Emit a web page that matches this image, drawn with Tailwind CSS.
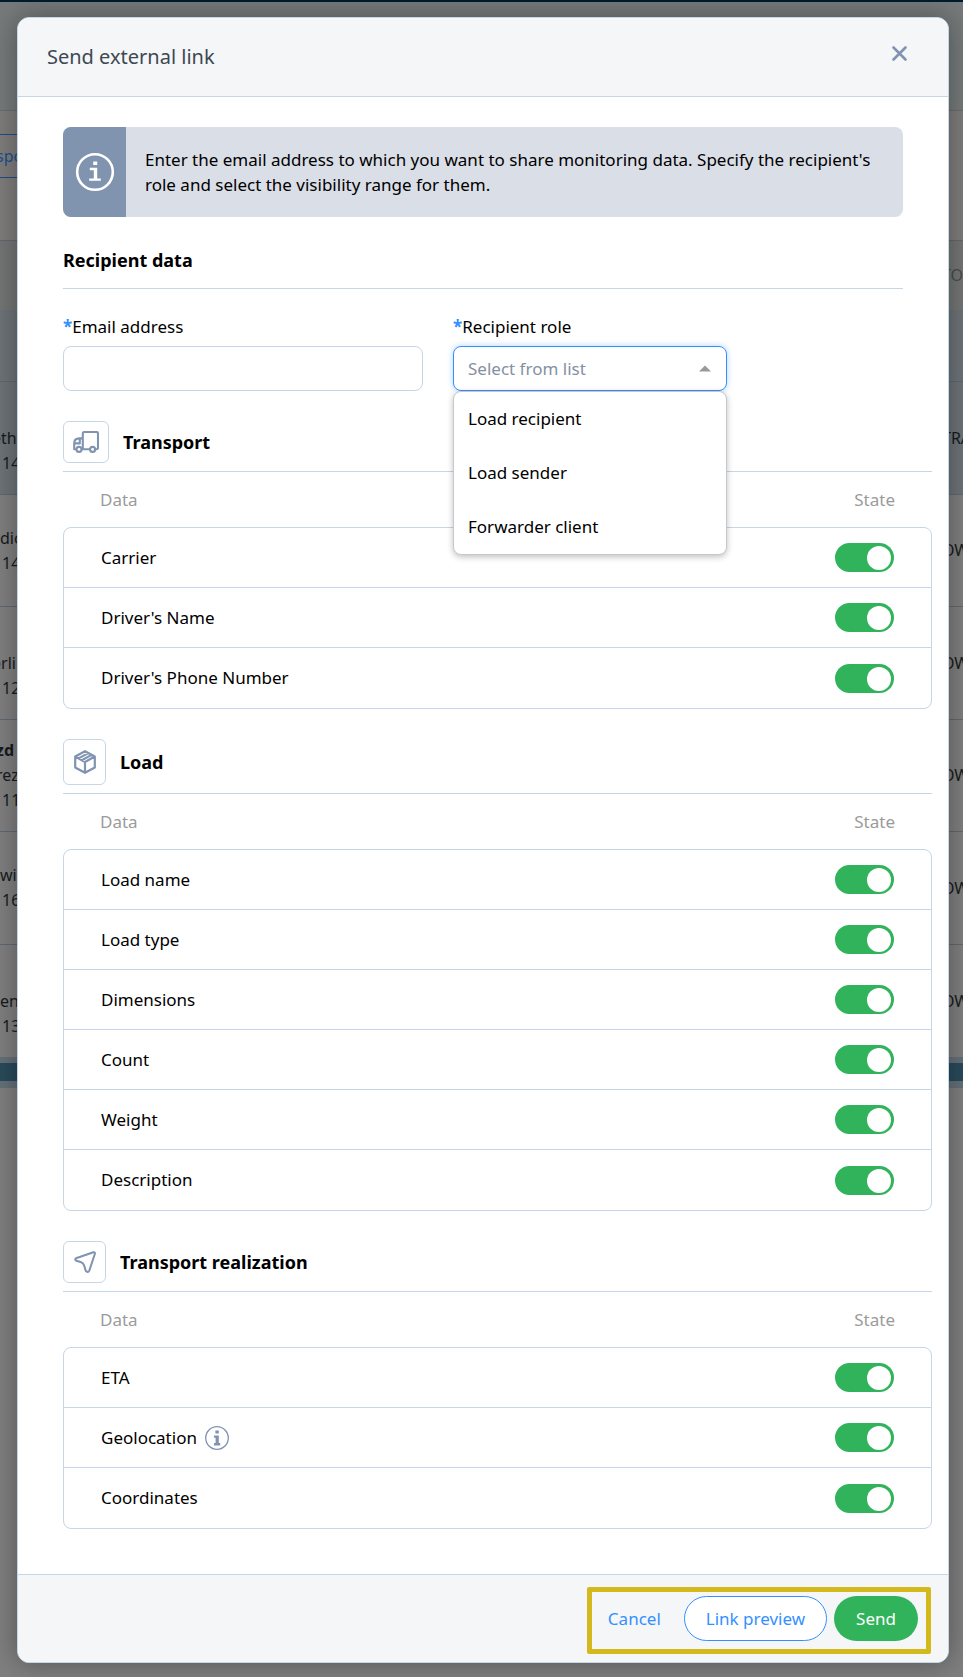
<!DOCTYPE html>
<html lang="en">
<head>
  <meta charset="utf-8" />
  <meta name="viewport" content="width=device-width, initial-scale=1" />
  <title>Send external link</title>
  <script src="https://cdn.jsdelivr.net/npm/@tailwindcss/browser@4"></script>
</head>
<body class="font-['Tahoma','Noto_Sans',sans-serif] text-[17px] leading-6 text-black bg-[#7f7f7f]">
  <div class="grid min-h-screen overflow-hidden">

    <!-- Monitoring list behind the dialog -->
    <div class="col-start-1 row-start-1 min-w-0 overflow-hidden text-base leading-[25px] text-[#161b20] whitespace-nowrap" aria-hidden="true">
      <div class="h-0.5 bg-[#001c2e]"></div>
      <div class="h-[109px] bg-[#767a7b] border-b border-[#686d71]"></div>
      <div class="h-[130px] pt-[23px] bg-[#7f7d7c] border-b border-[#5f6871]">
        <div class="w-8 h-11 border-y border-[#1c4f8c] text-[#1c4f8c] leading-[42px]"><span class="-ml-1">spo</span></div>
      </div>
      <div class="h-[69px] flex items-center justify-end bg-[#737674] text-[#494c50]"><span class="w-[21px]">TOR</span></div>
      <div class="h-[72px] bg-[#6d7378] border-b border-[#5f6871]"></div>
      <div class="h-[113px] flex items-center justify-between bg-[#6d7378] border-b border-[#5f6871]">
        <div><br /><span class="-ml-2">eth</span><br /><span class="pl-0.5">14</span></div><span class="w-[21px]">TRA</span>
      </div>
      <div class="h-28 flex items-center justify-between border-b border-[#5f6871]">
        <div>dic<br /><span class="pl-0.5">14</span></div><span class="w-[21px]">OW</span>
      </div>
      <div class="h-[113px] flex items-center justify-between border-b border-[#5f6871]">
        <div><br /><span class="-ml-2">erli</span><br /><span class="pl-0.5">12</span></div><span class="w-[21px]">OW</span>
      </div>
      <div class="h-28 flex items-center justify-between border-b border-[#5f6871]">
        <div><b class="-ml-1">zd</b><br /><span class="-ml-1">rez</span><br /><span class="pl-0.5">11</span></div><span class="w-[21px]">OW</span>
      </div>
      <div class="h-[113px] flex items-center justify-between border-b border-[#5f6871]">
        <div>wi<br /><span class="pl-0.5">16</span></div><span class="w-[21px]">OW</span>
      </div>
      <div class="h-28 flex items-center justify-between">
        <div><br />en<br /><span class="pl-0.5">13</span></div><span class="w-[21px]">OW</span>
      </div>
      <div class="h-[31px] bg-[#294a5b] border-t-[6px] border-b-[7px] border-[#657078]"></div>
    </div>

    <!-- Dialog -->
    <form role="dialog" aria-labelledby="dialog-title" class="col-start-1 row-start-1 relative self-start mt-[17px] mb-3.5 ml-[17px] mr-3.5 flex flex-col rounded-xl border border-[#c5d6e6] bg-white shadow-[0_0_28px_rgba(0,0,0,0.35)]">
      <header class="h-[79px] flex justify-between items-start pt-[23px] pl-[29px] pr-10 rounded-t-xl bg-[#f4f6f8] border-b border-[#c5d6e6]">
        <h1 id="dialog-title" class="text-xl leading-8 text-[#3d4852]">Send external link</h1>
        <button type="button" aria-label="Close" class="mt-1 text-[#8093b0]">
          <svg class="size-[17px]" viewBox="0 0 17 17" fill="none" stroke="currentColor" stroke-width="2.6" stroke-linecap="round"><path d="M2.5 2.5l12 12M14.5 2.5l-12 12" /></svg>
        </button>
      </header>

      <div class="pt-[30px] pb-[45px] pl-[45px] pr-4">
        <div class="mr-[29px]">
          <!-- Hint -->
          <div class="flex rounded-lg overflow-hidden bg-[#dadee7]">
            <div class="w-[63px] shrink-0 flex items-center justify-center bg-[#8093af]">
              <svg class="size-10" viewBox="0 0 40 40" fill="none"><circle cx="20" cy="20" r="17.8" stroke="#fff" stroke-width="2.6" /><path d="M18.2 9.5h4v3.4h-4zM14.8 15.8h7.4v10.6h3.6v2.4H14.2v-2.4h4.6v-8.2h-4z" fill="#fff" /></svg>
            </div>
            <p class="py-5 pl-[19px] pr-5 leading-[25px]">Enter the email address to which you want to share monitoring data. Specify the recipient's role and select the visibility range for them.</p>
          </div>

          <h2 class="mt-[30px] pb-[15px] text-lg font-bold leading-[26px] border-b border-[#c5d6e6]">Recipient data</h2>

          <div class="mt-[26px] flex gap-[30px]">
            <div class="w-[360px]">
              <label for="email" class="block h-[31px]"><span class="font-bold text-[#3490ff]">*</span>Email address</label>
              <input id="email" type="email" class="block w-full h-[45px] px-4 rounded-lg border border-[#c5d6e6] bg-white outline-none" />
            </div>
            <div class="w-[274px] relative">
              <label for="role" class="block h-[31px]"><span class="font-bold text-[#3490ff]">*</span>Recipient role</label>
              <select id="role" class="block w-full h-[45px] px-3.5 rounded-lg border border-[#3490ff] bg-white appearance-none outline-none text-[#8590a2] shadow-[0_0_6px_rgba(52,144,255,0.4)]">
                <option>Select from list</option>
              </select>
              <svg class="absolute right-4 top-[50px] w-3 h-[7px]" viewBox="0 0 12 7"><path d="M0 6.5L6 .5l6 6z" fill="#999" /></svg>
              <ul class="absolute z-10 top-[76px] inset-x-0 rounded-lg border border-[#c6c8cc] bg-white shadow-[0_2px_6px_rgba(0,0,0,0.25)]">
                <li class="h-[54px] px-3.5 leading-[54px]">Load recipient</li>
                <li class="h-[54px] px-3.5 leading-[54px]">Load sender</li>
                <li class="h-[54px] px-3.5 leading-[54px]">Forwarder client</li>
              </ul>
            </div>
          </div>
        </div>

        <section class="mt-[30px]">
          <div class="flex items-center gap-3.5 pb-2 border-b border-[#c5d6e6]">
            <span class="w-[46px] h-[42px] flex items-center justify-center rounded-md border border-[#c5d6e6] text-[#8093b0]">
              <svg class="w-[26px] h-[22px]" viewBox="0 0 26 22" fill="none" stroke="currentColor" stroke-width="2.1" stroke-linejoin="round"><path d="M3 18.2H1.2v-5.6q0-5.2 5-5.2H9.6M1.6 12.4h5.2V8M9.8 18V2.6Q9.8 1 11.4 1h12Q25 1 25 2.6v14q0 1.6-1.6 1.6h-1M8.8 18.2h8" /><circle cx="6" cy="18.4" r="2.5" /><circle cx="19.6" cy="18.4" r="2.5" /></svg>
            </span>
            <h2 class="text-lg leading-6 font-bold">Transport</h2>
          </div>
          <div class="h-[55px] flex items-center justify-between pl-[37px] pr-[37px] text-[#9b9b9b]"><span>Data</span><span>State</span></div>
          <div class="rounded-lg border border-[#c5d6e6] divide-y divide-[#c5d6e6]">
            <label class="h-[60px] flex items-center justify-between px-[37px]">Carrier
              <input type="checkbox" checked class="appearance-none w-[59px] h-[29px] p-[3px] flex rounded-full bg-[#31b35b] before:size-6 before:rounded-full before:bg-white checked:justify-end" />
            </label>
            <label class="h-[60px] flex items-center justify-between px-[37px]">Driver's Name
              <input type="checkbox" checked class="appearance-none w-[59px] h-[29px] p-[3px] flex rounded-full bg-[#31b35b] before:size-6 before:rounded-full before:bg-white checked:justify-end" />
            </label>
            <label class="h-[60px] flex items-center justify-between px-[37px]">Driver's Phone Number
              <input type="checkbox" checked class="appearance-none w-[59px] h-[29px] p-[3px] flex rounded-full bg-[#31b35b] before:size-6 before:rounded-full before:bg-white checked:justify-end" />
            </label>
          </div>
        </section>

        <section class="mt-[30px]">
          <div class="flex items-center gap-3.5 pb-2 border-b border-[#c5d6e6]">
            <span class="w-[43px] h-[46px] flex items-center justify-center rounded-md border border-[#c5d6e6] text-[#8093b0]">
              <svg class="w-[22px] h-6" viewBox="0 0 22 24" fill="none" stroke="currentColor" stroke-width="2.2" stroke-linejoin="round"><path d="M11 1.2l9.8 5.3v11L11 22.8l-9.8-5.3v-11zM1.2 6.5L11 12l9.8-5.5M11 12v10.8M4.6 8.4l9.8-5.3M7.8 10.2l9.8-5.3" /></svg>
            </span>
            <h2 class="text-lg leading-6 font-bold">Load</h2>
          </div>
          <div class="h-[55px] flex items-center justify-between pl-[37px] pr-[37px] text-[#9b9b9b]"><span>Data</span><span>State</span></div>
          <div class="rounded-lg border border-[#c5d6e6] divide-y divide-[#c5d6e6]">
            <label class="h-[60px] flex items-center justify-between px-[37px]">Load name
              <input type="checkbox" checked class="appearance-none w-[59px] h-[29px] p-[3px] flex rounded-full bg-[#31b35b] before:size-6 before:rounded-full before:bg-white checked:justify-end" />
            </label>
            <label class="h-[60px] flex items-center justify-between px-[37px]">Load type
              <input type="checkbox" checked class="appearance-none w-[59px] h-[29px] p-[3px] flex rounded-full bg-[#31b35b] before:size-6 before:rounded-full before:bg-white checked:justify-end" />
            </label>
            <label class="h-[60px] flex items-center justify-between px-[37px]">Dimensions
              <input type="checkbox" checked class="appearance-none w-[59px] h-[29px] p-[3px] flex rounded-full bg-[#31b35b] before:size-6 before:rounded-full before:bg-white checked:justify-end" />
            </label>
            <label class="h-[60px] flex items-center justify-between px-[37px]">Count
              <input type="checkbox" checked class="appearance-none w-[59px] h-[29px] p-[3px] flex rounded-full bg-[#31b35b] before:size-6 before:rounded-full before:bg-white checked:justify-end" />
            </label>
            <label class="h-[60px] flex items-center justify-between px-[37px]">Weight
              <input type="checkbox" checked class="appearance-none w-[59px] h-[29px] p-[3px] flex rounded-full bg-[#31b35b] before:size-6 before:rounded-full before:bg-white checked:justify-end" />
            </label>
            <label class="h-[60px] flex items-center justify-between px-[37px]">Description
              <input type="checkbox" checked class="appearance-none w-[59px] h-[29px] p-[3px] flex rounded-full bg-[#31b35b] before:size-6 before:rounded-full before:bg-white checked:justify-end" />
            </label>
          </div>
        </section>

        <section class="mt-[30px]">
          <div class="flex items-center gap-3.5 pb-2 border-b border-[#c5d6e6]">
            <span class="w-[43px] h-[42px] flex items-center justify-center rounded-md border border-[#c5d6e6] text-[#8093b0]">
              <svg class="size-[22px]" viewBox="0 0 22 22" fill="none" stroke="currentColor" stroke-width="2" stroke-linejoin="round"><path d="M2 7.2L19.4 1.3Q21.2 1 20.9 2.8L15.3 19.6Q14.6 21.2 12.9 20.8 11.6 20.5 11.3 18.4L10.2 14.6Q9.2 11.8 6.6 11L2.4 9.8Q.2 8.6 2 7.2z" /></svg>
            </span>
            <h2 class="text-lg leading-6 font-bold">Transport realization</h2>
          </div>
          <div class="h-[55px] flex items-center justify-between pl-[37px] pr-[37px] text-[#9b9b9b]"><span>Data</span><span>State</span></div>
          <div class="rounded-lg border border-[#c5d6e6] divide-y divide-[#c5d6e6]">
            <label class="h-[60px] flex items-center justify-between px-[37px]">ETA
              <input type="checkbox" checked class="appearance-none w-[59px] h-[29px] p-[3px] flex rounded-full bg-[#31b35b] before:size-6 before:rounded-full before:bg-white checked:justify-end" />
            </label>
            <label class="h-[60px] flex items-center justify-between px-[37px]">
              <span class="flex items-center gap-2">Geolocation
                <svg class="size-6" viewBox="0 0 24 24" fill="none"><circle cx="12" cy="12" r="11.3" stroke="#8093b0" stroke-width="1.3" /><path d="M10.4 4.6h3.4v2.8h-3.4zM9 9.4h4.8v7.6h1.4v2.4H9V17h1.6v-5.2H9z" fill="#8093b0" /></svg>
              </span>
              <input type="checkbox" checked class="appearance-none w-[59px] h-[29px] p-[3px] flex rounded-full bg-[#31b35b] before:size-6 before:rounded-full before:bg-white checked:justify-end" />
            </label>
            <label class="h-[60px] flex items-center justify-between px-[37px]">Coordinates
              <input type="checkbox" checked class="appearance-none w-[59px] h-[29px] p-[3px] flex rounded-full bg-[#31b35b] before:size-6 before:rounded-full before:bg-white checked:justify-end" />
            </label>
          </div>
        </section>
      </div>

      <footer class="flex justify-end pt-3 pb-2 pr-[17px] rounded-b-xl bg-[#f4f6f8] border-t border-[#c5d6e6]">
        <div class="flex gap-[7px] pt-1 pb-2 pr-2 rounded-xs border-5 border-[#d4b91c]">
          <button type="button" class="h-[45px] px-4 text-[#3490ff]">Cancel</button>
          <button type="button" class="h-[45px] px-[21px] rounded-full border border-[#3490ff] bg-white text-[#3490ff]">Link preview</button>
          <button type="submit" class="h-[45px] px-[22px] rounded-full bg-[#31b35b] text-white">Send</button>
        </div>
      </footer>
    </form>
  </div>
</body>
</html>
